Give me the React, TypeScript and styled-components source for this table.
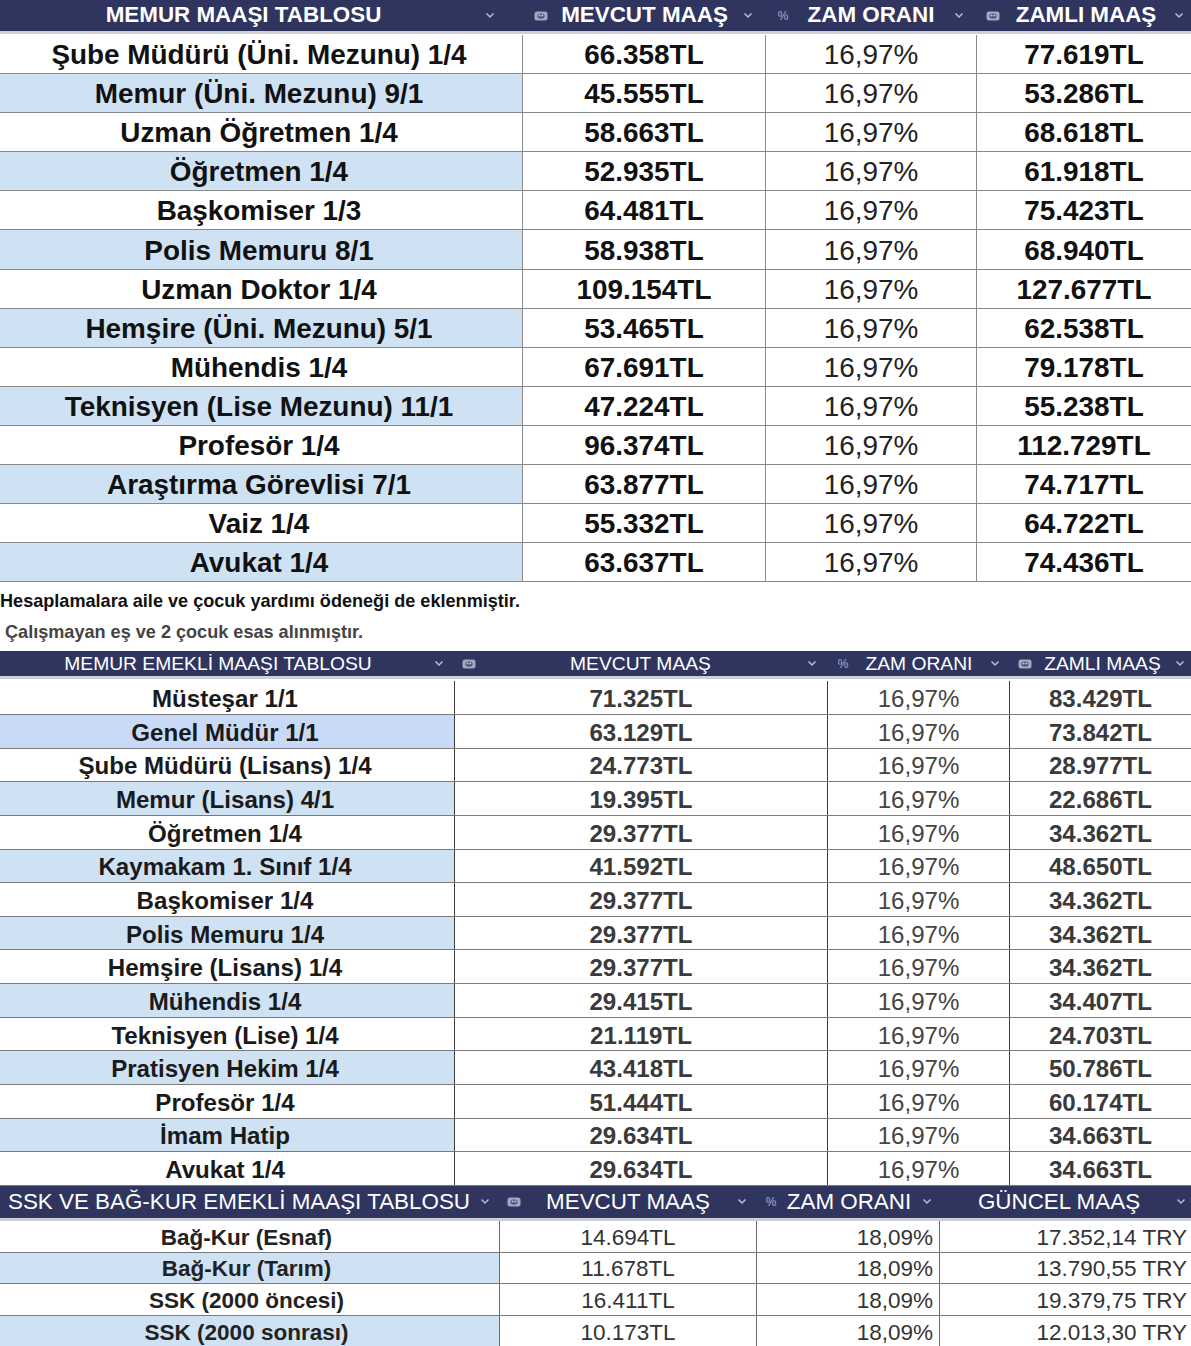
import React from "react";
import styled, { createGlobalStyle } from "styled-components";

const Global = createGlobalStyle`
  html, body { margin: 0; padding: 0; background: #ffffff; }
  body {
    font-family: "Liberation Sans", Arial, sans-serif;
    width: 1191px;
    overflow: hidden;
  }
`;

const Page = styled.div`
  width: 1191px;
  display: flex;
  flex-direction: column;
`;

const Table = styled.section<{ $gap: number }>`
  display: flex;
  flex-direction: column;
  & > header { margin-bottom: ${(p) => p.$gap}px; }
`;

const HeaderBar = styled.header<{ $cols: string; $h: number }>`
  display: grid;
  grid-template-columns: ${(p) => p.$cols};
  height: ${(p) => p.$h}px;
  background: #2f355f;
  border-bottom: 3px solid #cdced6;
  box-sizing: content-box;
`;

const HeadCell = styled.div<{ $pl: number; $pr: number }>`
  display: flex;
  align-items: center;
  padding: 0 ${(p) => p.$pr}px 0 ${(p) => p.$pl}px;
  min-width: 0;
  overflow: visible;
`;

const HeadText = styled.span<{ $size: number; $weight: number }>`
  flex: 1;
  text-align: center;
  color: #ffffff;
  font-size: ${(p) => p.$size}px;
  font-weight: ${(p) => p.$weight};
  white-space: nowrap;
  line-height: 1;
`;

const IconSlot = styled.span`
  display: inline-flex;
  align-items: center;
  justify-content: center;
  width: 14px;
  flex: none;
  color: #a9aecb;
  font-size: 12px;
`;

const Row = styled.div<{ $cols: string; $h: number; $line: string }>`
  display: grid;
  grid-template-columns: ${(p) => p.$cols};
  height: ${(p) => p.$h}px;
  box-sizing: border-box;
  border-bottom: 1px solid ${(p) => p.$line};
`;

const Cell = styled.div<{
  $align: "center" | "right";
  $bg: string;
  $size: number;
  $weight: number;
  $color: string;
  $divider: string;
  $pr: number;
  $pt: number;
}>`
  display: flex;
  align-items: center;
  justify-content: ${(p) => (p.$align === "right" ? "flex-end" : "center")};
  padding-right: ${(p) => p.$pr}px;
  padding-top: ${(p) => p.$pt}px;
  background: ${(p) => p.$bg};
  border-right: 1px solid ${(p) => p.$divider};
  font-size: ${(p) => p.$size}px;
  font-weight: ${(p) => p.$weight};
  color: ${(p) => p.$color};
  white-space: nowrap;
  &:last-child { border-right: none; }
`;

const Notes = styled.div`
  display: flex;
  flex-direction: column;
  gap: 9px;
  padding: 8px 0 8px 0;
`;

const Note = styled.p<{ $indent: number; $color: string }>`
  margin: 0;
  padding-left: ${(p) => p.$indent}px;
  font-size: 18.1px;
  line-height: 22px;
  font-weight: 700;
  color: ${(p) => p.$color};
  white-space: nowrap;
`;

const Money = () => (
  <svg width="14" height="10" viewBox="0 0 14 10" aria-hidden>
    <rect x="0.5" y="0.5" width="13" height="9" rx="2.5" fill="#a3a7c0" />
    <ellipse cx="7" cy="5" rx="3.6" ry="2.6" fill="#4c527a" />
    <circle cx="5.6" cy="4.4" r="1" fill="#c9cce0" />
    <circle cx="8.4" cy="4.4" r="1" fill="#c9cce0" />
  </svg>
);

const Chevron = () => (
  <svg width="10" height="7" viewBox="0 0 10 7" aria-hidden>
    <polyline points="1.5,1.5 5,5 8.5,1.5" fill="none" stroke="#b9bdd3" strokeWidth="1.5" />
  </svg>
);

type HeadDef = { text: string; icon?: "money" | "pct"; pl: number; pr: number };
type ColDef = { align: "center" | "right"; weight: number; color: string; pr: number };

type TableDef = {
  cols: string;
  headH: number;
  headSize: number;
  headWeight: number;
  gap: number;
  heads: HeadDef[];
  colDefs: ColDef[];
  rowH: number;
  size: number;
  pt: number;
  line: string;
  divider: string;
  rows: string[][];
  altColor: (i: number) => string;
};

const SheetTable = ({ def }: { def: TableDef }) => (
  <Table $gap={def.gap}>
    <HeaderBar $cols={def.cols} $h={def.headH}>
      {def.heads.map((h, i) => (
        <HeadCell key={i} $pl={h.pl} $pr={h.pr}>
          {h.icon === "money" && (
            <IconSlot>
              <Money />
            </IconSlot>
          )}
          {h.icon === "pct" && <IconSlot>%</IconSlot>}
          <HeadText $size={def.headSize} $weight={def.headWeight}>
            {h.text}
          </HeadText>
          <IconSlot>
            <Chevron />
          </IconSlot>
        </HeadCell>
      ))}
    </HeaderBar>
    {def.rows.map((r, ri) => (
      <Row key={ri} $cols={def.cols} $h={def.rowH} $line={def.line}>
        {r.map((v, ci) => (
          <Cell
            key={ci}
            $align={def.colDefs[ci].align}
            $bg={ci === 0 && ri % 2 === 1 ? def.altColor(ri) : "#ffffff"}
            $size={def.size}
            $weight={def.colDefs[ci].weight}
            $color={def.colDefs[ci].color}
            $divider={def.divider}
            $pr={def.colDefs[ci].pr}
            $pt={def.pt}
          >
            {v}
          </Cell>
        ))}
      </Row>
    ))}
  </Table>
);

const r1 = "16,97%";
const memur: TableDef = {
  cols: "523px 243px 211px 214px",
  headH: 31,
  headSize: 22.4,
  headWeight: 700,
  gap: 1,
  heads: [
    { text: "MEMUR MAAŞI TABLOSU", pl: 4, pr: 26 },
    { text: "MEVCUT MAAŞ", icon: "money", pl: 11, pr: 11 },
    { text: "ZAM ORANI", icon: "pct", pl: 10, pr: 11 },
    { text: "ZAMLI MAAŞ", icon: "money", pl: 9, pr: 5 },
  ],
  colDefs: [
    { align: "center", weight: 700, color: "#111111", pr: 4 },
    { align: "center", weight: 700, color: "#111111", pr: 0 },
    { align: "center", weight: 400, color: "#222222", pr: 0 },
    { align: "center", weight: 700, color: "#111111", pr: 0 },
  ],
  rowH: 39.1,
  size: 27.9,
  pt: 2,
  line: "#8a8a8a",
  divider: "#8a8a8a",
  altColor: () => "#cfe2f3",
  rows: [
    ["Şube Müdürü (Üni. Mezunu) 1/4", "66.358TL", r1, "77.619TL"],
    ["Memur (Üni. Mezunu) 9/1", "45.555TL", r1, "53.286TL"],
    ["Uzman Öğretmen 1/4", "58.663TL", r1, "68.618TL"],
    ["Öğretmen 1/4", "52.935TL", r1, "61.918TL"],
    ["Başkomiser 1/3", "64.481TL", r1, "75.423TL"],
    ["Polis Memuru 8/1", "58.938TL", r1, "68.940TL"],
    ["Uzman Doktor 1/4", "109.154TL", r1, "127.677TL"],
    ["Hemşire (Üni. Mezunu) 5/1", "53.465TL", r1, "62.538TL"],
    ["Mühendis 1/4", "67.691TL", r1, "79.178TL"],
    ["Teknisyen (Lise Mezunu) 11/1", "47.224TL", r1, "55.238TL"],
    ["Profesör 1/4", "96.374TL", r1, "112.729TL"],
    ["Araştırma Görevlisi 7/1", "63.877TL", r1, "74.717TL"],
    ["Vaiz 1/4", "55.332TL", r1, "64.722TL"],
    ["Avukat 1/4", "63.637TL", r1, "74.436TL"],
  ],
};

const emekli: TableDef = {
  cols: "455px 373px 182px 181px",
  headH: 25,
  headSize: 19.25,
  headWeight: 400,
  gap: 2,
  heads: [
    { text: "MEMUR EMEKLİ MAAŞI TABLOSU", pl: 4, pr: 9 },
    { text: "MEVCUT MAAŞ", icon: "money", pl: 7, pr: 9 },
    { text: "ZAM ORANI", icon: "pct", pl: 8, pr: 8 },
    { text: "ZAMLI MAAŞ", icon: "money", pl: 8, pr: 4 },
  ],
  colDefs: [
    { align: "center", weight: 700, color: "#1a1a1a", pr: 4 },
    { align: "center", weight: 700, color: "#3a3a3a", pr: 0 },
    { align: "center", weight: 400, color: "#444444", pr: 0 },
    { align: "center", weight: 700, color: "#3a3a3a", pr: 0 },
  ],
  rowH: 33.65,
  size: 24.1,
  pt: 3,
  line: "#7a7a7a",
  divider: "#3c3c3c",
  altColor: (i) => (i === 1 ? "#c9daf8" : "#cfe2f3"),
  rows: [
    ["Müsteşar 1/1", "71.325TL", r1, "83.429TL"],
    ["Genel Müdür 1/1", "63.129TL", r1, "73.842TL"],
    ["Şube Müdürü (Lisans) 1/4", "24.773TL", r1, "28.977TL"],
    ["Memur (Lisans) 4/1", "19.395TL", r1, "22.686TL"],
    ["Öğretmen 1/4", "29.377TL", r1, "34.362TL"],
    ["Kaymakam 1. Sınıf 1/4", "41.592TL", r1, "48.650TL"],
    ["Başkomiser 1/4", "29.377TL", r1, "34.362TL"],
    ["Polis Memuru 1/4", "29.377TL", r1, "34.362TL"],
    ["Hemşire (Lisans) 1/4", "29.377TL", r1, "34.362TL"],
    ["Mühendis 1/4", "29.415TL", r1, "34.407TL"],
    ["Teknisyen (Lise) 1/4", "21.119TL", r1, "24.703TL"],
    ["Pratisyen Hekim 1/4", "43.418TL", r1, "50.786TL"],
    ["Profesör 1/4", "51.444TL", r1, "60.174TL"],
    ["İmam Hatip", "29.634TL", r1, "34.663TL"],
    ["Avukat 1/4", "29.634TL", r1, "34.663TL"],
  ],
};

const r3 = "18,09%";
const ssk: TableDef = {
  cols: "500px 257px 183px 251px",
  headH: 32,
  headSize: 22.4,
  headWeight: 400,
  gap: 0,
  heads: [
    { text: "SSK VE BAĞ-KUR EMEKLİ MAAŞI TABLOSU", pl: 0, pr: 8 },
    { text: "MEVCUT MAAŞ", icon: "money", pl: 7, pr: 8 },
    { text: "ZAM ORANI", icon: "pct", pl: 7, pr: 6 },
    { text: "GÜNCEL MAAŞ", pl: 4, pr: 3 },
  ],
  colDefs: [
    { align: "center", weight: 700, color: "#222222", pr: 6 },
    { align: "center", weight: 400, color: "#333333", pr: 0 },
    { align: "right", weight: 400, color: "#333333", pr: 6 },
    { align: "right", weight: 400, color: "#333333", pr: 4 },
  ],
  rowH: 31.6,
  size: 22.5,
  pt: 3,
  line: "#7a7a7a",
  divider: "#6a6a6a",
  altColor: () => "#cfe2f3",
  rows: [
    ["Bağ-Kur (Esnaf)", "14.694TL", r3, "17.352,14 TRY"],
    ["Bağ-Kur (Tarım)", "11.678TL", r3, "13.790,55 TRY"],
    ["SSK (2000 öncesi)", "16.411TL", r3, "19.379,75 TRY"],
    ["SSK (2000 sonrası)", "10.173TL", r3, "12.013,30 TRY"],
  ],
};

export default function App() {
  return (
    <Page>
      <Global />
      <SheetTable def={memur} />
      <Notes>
        <Note $indent={0} $color="#111111">
          Hesaplamalara aile ve çocuk yardımı ödeneği de eklenmiştir.
        </Note>
        <Note $indent={5} $color="#444444">
          Çalışmayan eş ve 2 çocuk esas alınmıştır.
        </Note>
      </Notes>
      <SheetTable def={emekli} />
      <SheetTable def={ssk} />
    </Page>
  );
}
